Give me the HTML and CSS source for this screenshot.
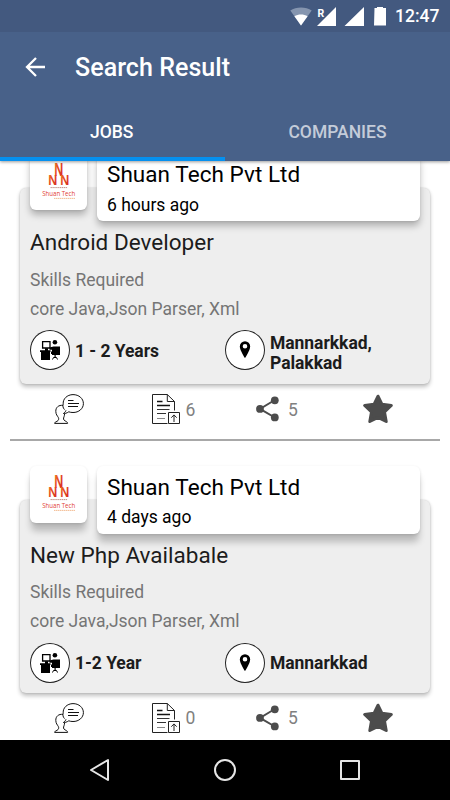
FILE: index.html
```html
<!DOCTYPE html>
<html lang="en">
<head>
<meta charset="utf-8">
<title>Search Result</title>
<link rel="stylesheet" href="styles.css">
</head>
<body>
<svg class="defs" aria-hidden="true">
  <defs>
    <linearGradient id="flame" x1="0" y1="0" x2="1" y2="1">
      <stop offset="0" stop-color="#f08a22"/>
      <stop offset=".4" stop-color="#e54a22"/>
      <stop offset="1" stop-color="#d3251f"/>
    </linearGradient>
    <symbol id="logo" viewBox="0 0 57 57">
      <g fill="url(#flame)" font-family="Liberation Sans" font-weight="700">
        <text x="24.300" y="21.500" font-size="17.500" textLength="9" lengthAdjust="spacingAndGlyphs">N</text>
        <text x="18.200" y="31.300" font-size="15.500" textLength="9" lengthAdjust="spacingAndGlyphs">N</text>
        <text x="30.200" y="31.300" font-size="15.500" textLength="9" lengthAdjust="spacingAndGlyphs">N</text>
      </g>
      <path d="M20.500 33.600h17" stroke="#b9857c" stroke-width=".9" stroke-dasharray="1.400 .5"/>
      <text x="12.200" y="42" font-size="6.800" font-family="Open Sans" fill="#df4136" textLength="33" lengthAdjust="spacingAndGlyphs">Shuan Tech</text>
      <path d="M24 44.400h21" stroke="#f0b486" stroke-width=".9" stroke-dasharray="1.500 .5"/>
    </symbol>
    <symbol id="desk" viewBox="0 0 40 40">
      <path d="M12.600 11.600h7.400v6.400h-7.400z" fill="#fff" stroke="#000" stroke-width="1.300"/>
      <circle cx="24.900" cy="12.300" r="2.300"/>
      <path d="M15 18.200h3v2h-3zM10 20.200h10.500v1.800H20V30h-9v-8h-1zM19.500 17.600l4-1.100h6.500V25h-8v-5.300h-2.500zM24.500 25h1.200v2.500h-1.200z"/>
      <path d="M22.500 29.500l1-2h3l1 2M21.500 24v-2.500" fill="none" stroke="#000" stroke-width="1"/>
    </symbol>
    <symbol id="pin" viewBox="0 0 40 40">
      <path fill-rule="evenodd" d="M20 11.300a5.200 5.200 0 0 0-5.200 5.200C14.800 20.300 20 28.200 20 28.200s5.200-7.900 5.200-11.700a5.200 5.200 0 0 0-5.200-5.200zm0 2.700a2.300 2.300 0 1 1 0 4.600 2.300 2.300 0 0 1 0-4.600z"/>
    </symbol>
    <symbol id="chat" viewBox="0 0 30 30">
      <g fill="none" stroke="#111" stroke-width="1">
        <path d="M10.500 15.600C8.800 13.800 8.700 12 9.200 9.800 8.800 5 13 .7 19 .6c6 0 10.400 4 10.400 9 0 5-4.600 9-10.400 8.900-1.700 0-3-.2-4.200-.7-2 1.400-4 1.800-5.400 1.700 1-.7 2.300-1.900 2.600-3.200"/>
        <path d="M9 11.400c-4.300-.6-7.400 2-7.200 6 .1 3.200 1.500 4.300 2.600 6.200.7 1.600.1 2.800-1.400 3.800C1.500 28 .6 28.400.6 29.400h13c-.1-1.500-1.400-1.900-2.700-2.600-1.700-1-1.600-2.400-.9-4 .4-1 .5-2 .6-3.200"/>
        <path d="M14 6.500h5.500M14 9.500h11M14 12.500h10"/>
      </g>
    </symbol>
    <symbol id="doc" viewBox="0 0 30 30">
      <g fill="none" stroke="#222" stroke-width="1">
        <path d="M16.500 29.500H1.500V.500h14.800l7.200 7v9M16.300.500v7h7.200"/>
        <path d="M17.500 18.500h11v11h-11zM23 28v-7M20.300 23.700l2.700-2.800 2.700 2.800"/>
        <path d="M6 24.500h8" stroke="#888"/>
        <path d="M6 19.500h9M6 15.500h12.500" stroke="#333"/>
      </g>
      <path d="M6 7.500h5.500M6 11.500h13" stroke="#111" stroke-width="1.400"/>
    </symbol>
    <symbol id="share" viewBox="0 0 24 26">
      <path d="M18.800 4L4 12.900l14.800 8.600" fill="none" stroke="#4c4c4c" stroke-width="2"/>
      <circle cx="18.800" cy="4.300" r="3.900"/><circle cx="4" cy="12.900" r="3.900"/><circle cx="18.800" cy="21.400" r="3.900"/>
    </symbol>
    <symbol id="star" viewBox="0 0 30 30">
      <path d="M15 2.200l4 8.100 9.300 1.200-6.800 6.500 1.700 9.500L15 23.400l-8.200 4.100L8.500 18 1.700 11.500l9.300-1.200z" stroke="#4c4c4c" stroke-width="3" stroke-linejoin="round"/>
    </symbol>
  </defs>
</svg>

<div class="screen">
  <header class="top">
    <div class="status">
      <svg class="signals" viewBox="0 0 98 20">
        <path d="M11 19.500L.3 4.600C6 .6 16 .6 21.700 4.600z" fill="#8595af"/>
        <path d="M11 19.500L4.400 10.200c4-2.400 9.200-2.400 13.200 0z" fill="#fff"/>
        <path d="M46 1v19H27zM74 1v19H54.500zM84.500 2H87V1h6v1h3v17.500H84z" fill="#fff"/>
        <path d="M26.500 0h8.500v11h-8.500z" fill="#43597f"/>
        <text x="27.500" y="10.600" class="roaming">R</text>
      </svg>
      <span class="clock">12:47</span>
    </div>
    <div class="toolbar">
      <svg class="back" viewBox="0 0 20 20"><path d="M20 10H2M11 1L2 10l9 9" fill="none" stroke="#fff" stroke-width="2.300"/></svg>
      <h1>Search Result</h1>
    </div>
    <nav class="tabs">
      <div class="tab active">JOBS</div>
      <div class="tab">COMPANIES</div>
    </nav>
  </header>

  <main class="list">
    <article class="job">
      <div class="head">
        <div class="logo"><svg><use href="#logo"/></svg></div>
        <div class="company"><h2>Shuan Tech Pvt Ltd</h2><p>6 hours ago</p></div>
      </div>
      <div class="panel">
        <h3>Android Developer</h3>
        <p class="label">Skills Required</p>
        <p class="skills">core Java,Json Parser, Xml</p>
        <div class="facts">
          <div class="fact"><svg class="round"><use href="#desk"/></svg><span>1 - 2 Years</span></div>
          <div class="fact"><svg class="round"><use href="#pin"/></svg><span>Mannarkkad, Palakkad</span></div>
        </div>
      </div>
      <div class="actions">
        <div class="action"><svg class="icon"><use href="#chat"/></svg></div>
        <div class="action"><svg class="icon"><use href="#doc"/></svg><span>6</span></div>
        <div class="action"><svg class="icon share"><use href="#share"/></svg><span>5</span></div>
        <div class="action"><svg class="icon star"><use href="#star"/></svg></div>
      </div>
    </article>
    <article class="job later">
      <div class="head">
        <div class="logo"><svg><use href="#logo"/></svg></div>
        <div class="company"><h2>Shuan Tech Pvt Ltd</h2><p>4 days ago</p></div>
      </div>
      <div class="panel">
        <h3>New Php Availabale</h3>
        <p class="label">Skills Required</p>
        <p class="skills">core Java,Json Parser, Xml</p>
        <div class="facts">
          <div class="fact"><svg class="round"><use href="#desk"/></svg><span>1-2 Year</span></div>
          <div class="fact"><svg class="round"><use href="#pin"/></svg><span>Mannarkkad</span></div>
        </div>
      </div>
      <div class="actions">
        <div class="action"><svg class="icon"><use href="#chat"/></svg></div>
        <div class="action"><svg class="icon"><use href="#doc"/></svg><span>0</span></div>
        <div class="action"><svg class="icon share"><use href="#share"/></svg><span>5</span></div>
        <div class="action"><svg class="icon star"><use href="#star"/></svg></div>
      </div>
    </article>
  </main>

  <footer class="navbar">
    <svg viewBox="0 0 22 24"><path d="M19 2v20L2 12z"/></svg>
    <svg viewBox="0 0 22 24"><circle cx="11" cy="12" r="10"/></svg>
    <svg viewBox="0 0 22 24"><path d="M2 3h18v18H2z"/></svg>
  </footer>
</div>
</body>
</html>
```
FILE: styles.css
```css
* { box-sizing: border-box; }
body { margin: 0; background: #fff; font-family: Roboto, sans-serif; font-size: 17.5px; line-height: 20.5px; color: #000; }
h1, h2, h3, p { margin: 0; font-weight: 400; }
svg { display: block; flex: none; }
.defs { position: absolute; width: 0; height: 0; }
.screen { display: flex; flex-direction: column; width: 450px; height: 800px; overflow: hidden; }

.top { position: relative; z-index: 3; flex: none; height: 161px; background: #486189; color: #fff; box-shadow: 0 1px 3px rgba(0, 0, 0, .4); }
.status { display: flex; align-items: center; justify-content: flex-end; height: 32px; padding-right: 10.5px; background: #43597f; font-weight: 500; }
.signals { width: 98px; height: 20px; margin: -1px 7.5px 0 0; }
.roaming { fill: #fff; font: 700 10.5px Roboto, sans-serif; }
.toolbar { display: flex; align-items: center; gap: 30px; height: 70px; padding-left: 25px; }
.back { width: 20px; height: 20px; }
.toolbar h1 { padding-top: 2px; font-size: 25px; line-height: 30px; font-weight: 500; letter-spacing: .06px; }
.tabs { display: flex; height: 59px; font-weight: 500; }
.tab { width: 225px; padding-top: 20px; text-align: center; color: #c4ccd9; }
.tab.active { padding-right: 1.5px; color: #fff; border-bottom: 4px solid #0590ef; }

.list { flex: 1; min-height: 0; overflow: hidden; }
.job { margin-top: -7.5px; }
.job.later { margin-top: 0; padding-top: 25px; }
.head { position: relative; z-index: 1; display: flex; align-items: flex-start; gap: 10px; height: 67.5px; padding: 0 30px; }
.logo, .company { background: #fff; border-radius: 6px; box-shadow: 0 5px 7px rgba(0, 0, 0, .26), 0 1px 2px rgba(0, 0, 0, .08); }
.logo { width: 57px; height: 56.5px; }
.logo svg { width: 57px; height: 57px; }
.company { flex: 1; height: 67.5px; padding: 7.5px 10px 0; }
.later .logo, .later .company { box-shadow: 0 9px 7px -1px rgba(0, 0, 0, .22), 0 1px 3px rgba(0, 0, 0, .12); }
.company h2 { font-size: 22.5px; line-height: 26.5px; letter-spacing: .05px; }
.company p { margin-top: 7px; }

.panel { margin: -33.5px 20px 0; padding: 41.5px 10px 10px; background: #eee; border-radius: 6px; box-shadow: 0 3px 4px rgba(0, 0, 0, .24), 0 0 2px rgba(0, 0, 0, .18); }
.panel h3 { font-size: 22.5px; line-height: 26.5px; letter-spacing: .02px; color: #1c1c1c; }
.label { margin-top: 14px; color: #757575; }
.skills { margin-top: 8.5px; color: #757575; }
.facts { display: flex; margin-top: 11px; }
.fact { display: flex; align-items: flex-start; gap: 5px; width: 195px; font-weight: 700; letter-spacing: -.05px; color: #1c1c1c; }
.fact span { display: flex; align-items: center; flex: 1; min-height: 40px; padding: 2.5px 30px .5px 0; }
.fact:first-child span { padding-right: 0; }
.round { width: 40px; height: 40px; border-radius: 50%; background: #fff; box-shadow: inset 0 0 0 1px #222; }

.actions { display: grid; grid-template-columns: 97px 105.5px 106px 60px; height: 55px; padding: 10px 0 0 53.5px; color: #808080; }
.later .actions { height: 48px; }
.action { display: flex; align-items: center; gap: 5px; height: 30px; }
.action span { padding-top: 2px; }
.icon { width: 30px; height: 30px; }
.share { width: 24px; height: 26px; fill: #4c4c4c; }
.share + span { margin-left: 3px; }
.star { fill: #4c4c4c; margin-left: 1px; }
.job:first-child::after { content: ""; display: block; height: 2px; margin: 0 10px; background: #a8a8a8; }

.navbar { display: flex; align-items: center; justify-content: center; gap: 103px; height: 60px; flex: none; background: #000; }
.navbar svg { width: 22px; height: 24px; fill: none; stroke: #e6e6e6; stroke-width: 2; stroke-linejoin: round; }
```
